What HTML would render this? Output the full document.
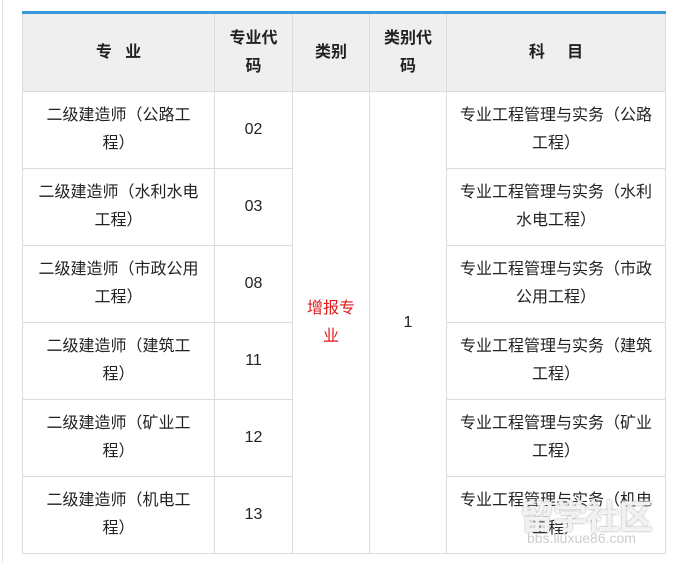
<!DOCTYPE html>
<html><head><meta charset="utf-8"><style>
body{margin:0;width:689px;height:562px;background:#fff;position:relative;overflow:hidden;font-family:"Liberation Sans","Noto Sans CJK SC",sans-serif;}
.lb{position:absolute;left:2px;top:0;width:1px;height:562px;background:#e4e4e4}
table{position:absolute;left:22px;top:11px;border-collapse:collapse;border-top:3px solid #3a9ad9;table-layout:fixed}
td{border:1px solid #dcdcdc;text-align:center;vertical-align:middle;font-size:16px;line-height:28px;color:#222;padding:0 4px;white-space:nowrap}
tr.h td{background:#efefef;font-weight:bold;height:77px}
tr.r td{height:76px}
.red{color:#e0191b}
.wm{position:absolute;left:520px;top:490px;font-size:34px;font-weight:bold;color:rgba(255,255,255,.85);text-shadow:0 0 2px #999;letter-spacing:-1px}
.wm2{position:absolute;left:527px;top:530px;font-size:14px;color:rgba(200,200,200,.9)}
</style></head><body>
<div class="lb"></div>
<table>
<colgroup><col style="width:192px"><col style="width:78px"><col style="width:77px"><col style="width:77px"><col style="width:219px"></colgroup>
<tr class="h"><td>专&nbsp;&nbsp;&nbsp;业</td><td>专业代<br>码</td><td>类别</td><td>类别代<br>码</td><td>科&nbsp;&nbsp;&nbsp;&nbsp;&nbsp;目</td></tr>
<tr class="r"><td>二级建造师（公路工<br>程）</td><td>02</td><td rowspan="6" class="red">增报专<br>业</td><td rowspan="6">1</td><td>专业工程管理与实务（公路<br>工程）</td></tr>
<tr class="r"><td>二级建造师（水利水电<br>工程）</td><td>03</td><td>专业工程管理与实务（水利<br>水电工程）</td></tr>
<tr class="r"><td>二级建造师（市政公用<br>工程）</td><td>08</td><td>专业工程管理与实务（市政<br>公用工程）</td></tr>
<tr class="r"><td>二级建造师（建筑工<br>程）</td><td>11</td><td>专业工程管理与实务（建筑<br>工程）</td></tr>
<tr class="r"><td>二级建造师（矿业工<br>程）</td><td>12</td><td>专业工程管理与实务（矿业<br>工程）</td></tr>
<tr class="r"><td>二级建造师（机电工<br>程）</td><td>13</td><td>专业工程管理与实务（机电<br>工程）</td></tr>
</table>
<div class="wm">留学社区</div>
<div class="wm2">bbs.liuxue86.com</div>
</body></html>
